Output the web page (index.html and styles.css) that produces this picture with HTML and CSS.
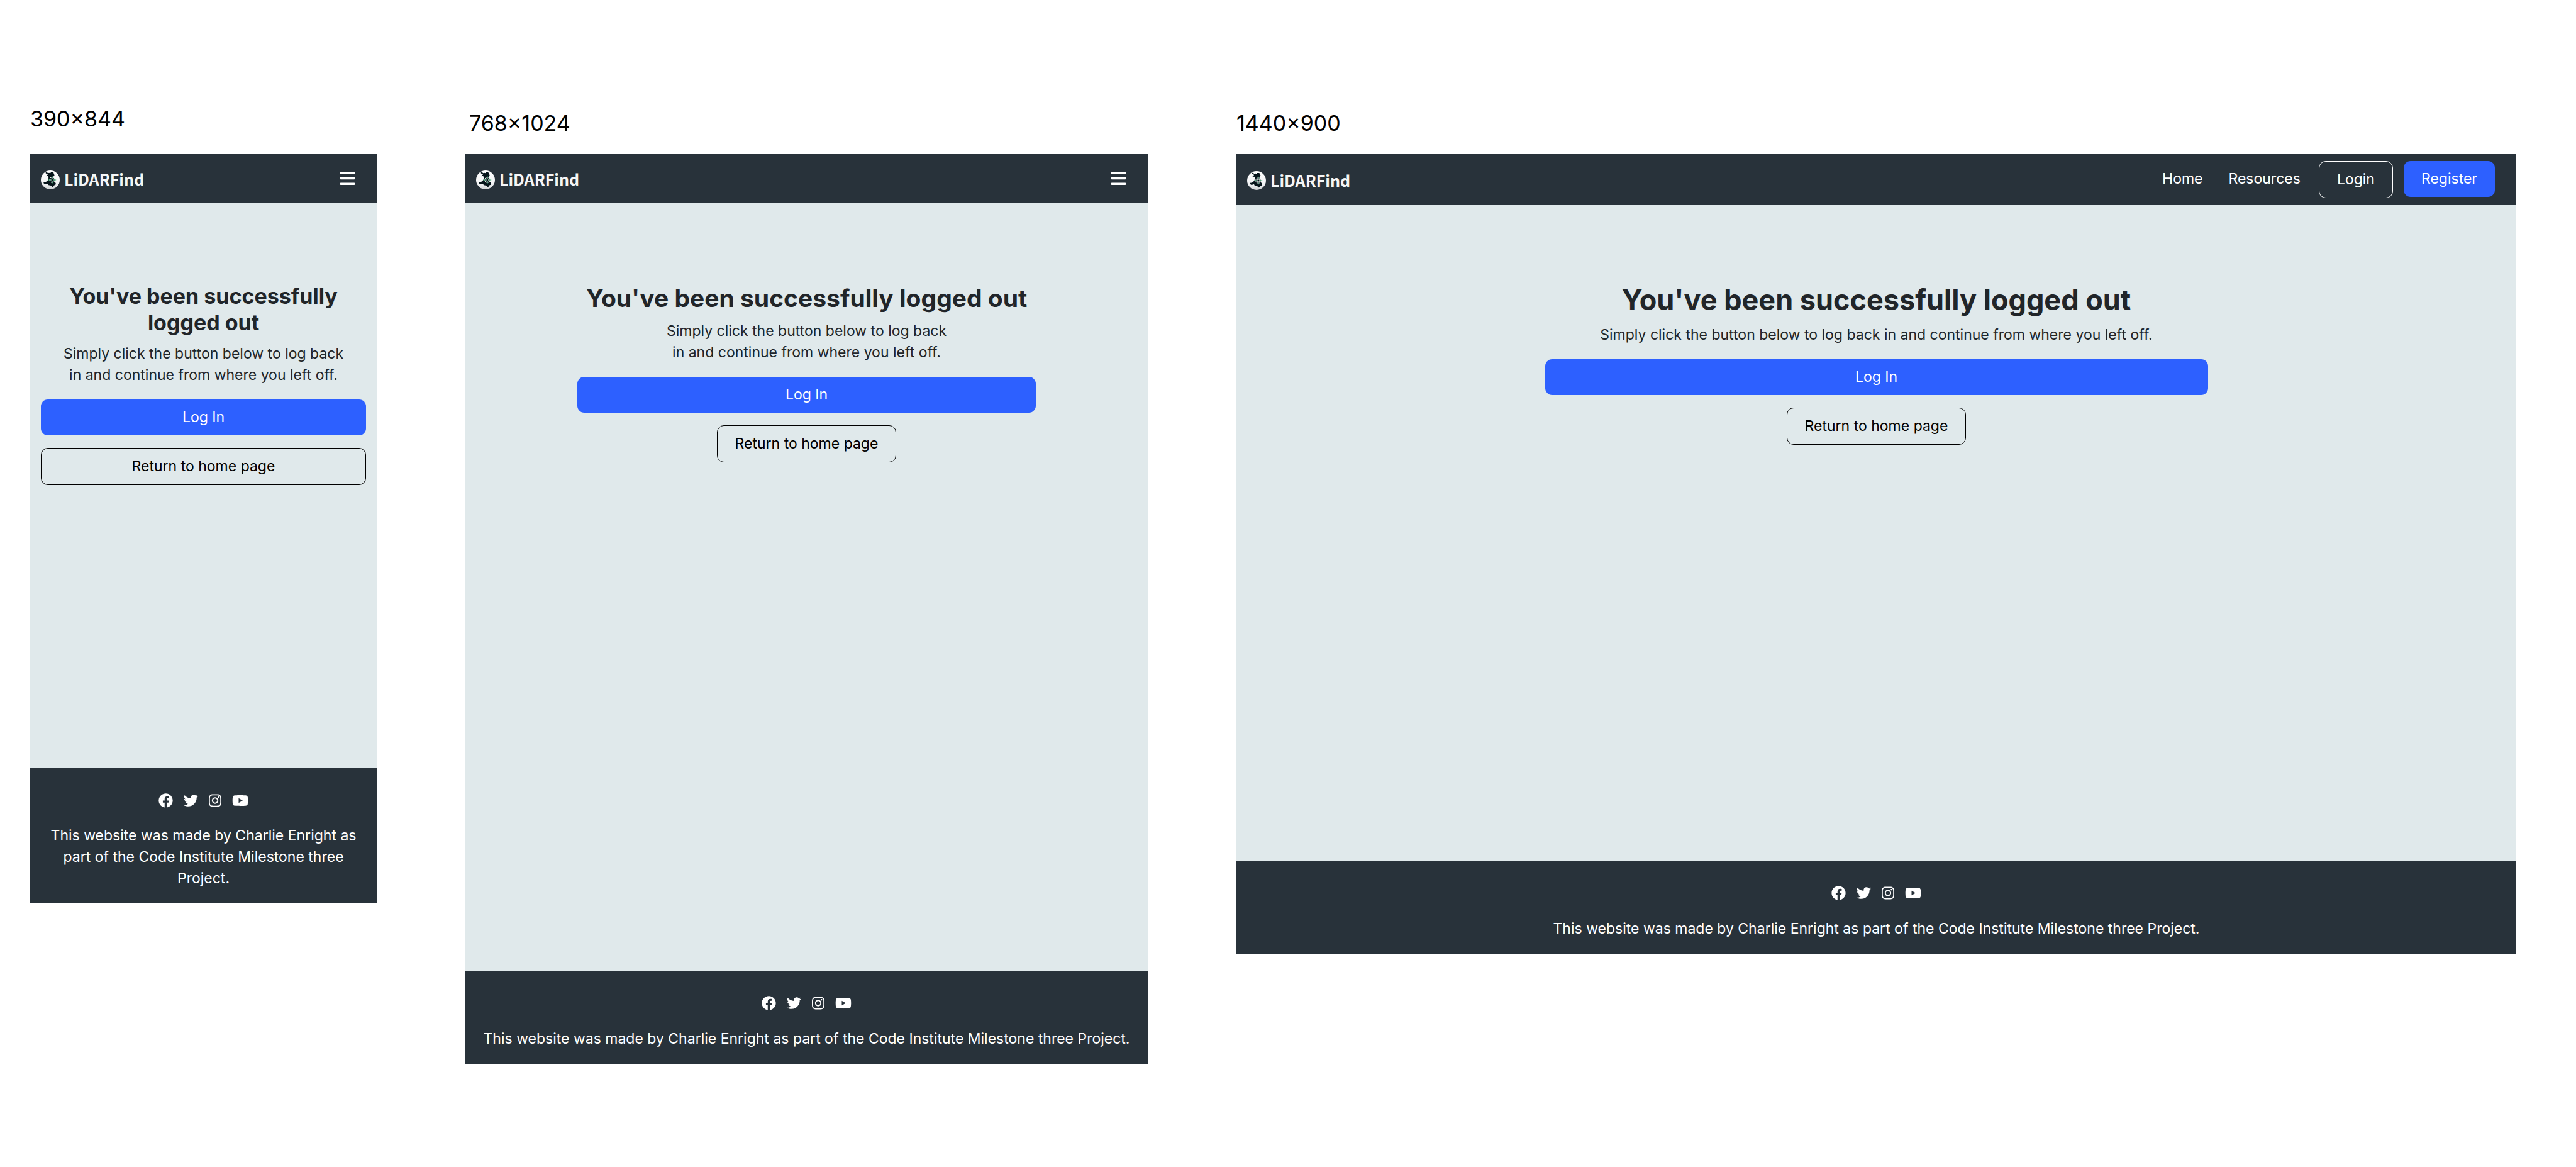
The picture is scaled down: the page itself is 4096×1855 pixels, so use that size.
FILE: index.html
```html
<!DOCTYPE html>
<html lang="en">
<head>
<meta charset="utf-8">
<title>LiDARFind – Logged out</title>
<link rel="stylesheet" href="styles.css">
</head>
<body>
<svg class="sprite" aria-hidden="true">
  <defs>
    <linearGradient id="globe-fill" x1="0" y1="0" x2="0" y2="1">
      <stop offset="0" stop-color="#ffffff"/>
      <stop offset="0.7" stop-color="#f2f3f4"/>
      <stop offset="1" stop-color="#cfd2d4"/>
    </linearGradient>
  </defs>
  <symbol id="logo-mark" viewBox="0 0 124 124">
    <circle cx="62" cy="62" r="62" fill="url(#globe-fill)"/>
    <path fill="#06141a" d="M33 20 L31 14 L37 10 L42 13 L46 18 L54 15 L62 18 L66 12 L78 12 L84 16 L85 24 L90 30 L84 36 L82 44 L88 52 L92 62 L90 72 L98 84 L96 94 L86 98 L82 106 L76 109 L72 102 L62 98 L50 96 L46 88 L38 86 L34 91 L26 90 L18 84 L18 77 L30 76 L40 70 L48 62 L50 52 L50 42 L46 36 L36 38 L37 32 L46 26 L42 22 Z"/>
    <g fill="none" stroke="#f4f6f6" stroke-width="4">
      <circle cx="74" cy="62" r="17"/>
      <circle cx="74" cy="62" r="9"/>
    </g>
    <path fill="none" stroke="#2fae6b" stroke-width="4" d="M74 36V54M74 70V88M48 62H66M82 62H100"/>
  </symbol>
  <symbol id="icon-menu" viewBox="0 0 25 21">
    <path fill="none" stroke="#fff" stroke-width="3.5" stroke-linecap="round" d="M1.8 1.8H23.2M1.8 10.5H23.2M1.8 19.2H23.2"/>
  </symbol>
  <symbol id="icon-facebook" viewBox="0 0 512 512">
    <path fill="#fff" d="M504 256C504 119 393 8 256 8S8 119 8 256c0 123.800 90.700 226.400 209.250 245V327.700h-63V256h63v-54.640c0-62.150 37-96.480 93.670-96.480 27.140 0 55.520 4.840 55.520 4.840v61h-31.280c-30.800 0-40.410 19.120-40.410 38.730V256h68.780l-11 71.690h-57.780V501C413.310 482.380 504 379.780 504 256z"/>
  </symbol>
  <symbol id="icon-twitter" viewBox="0 0 512 512">
    <path fill="#fff" d="M459.370 151.716c.325 4.548.325 9.097.325 13.645 0 138.720-105.583 298.558-298.558 298.558-59.452 0-114.680-17.219-161.137-47.106 8.447.974 16.568 1.299 25.340 1.299 49.055 0 94.213-16.568 130.274-44.832-46.132-.975-84.792-31.188-98.112-72.772 6.498.974 12.995 1.624 19.818 1.624 9.421 0 18.843-1.300 27.614-3.573-48.081-9.747-84.143-51.980-84.143-102.985v-1.299c13.969 7.797 30.214 12.670 47.431 13.319-28.264-18.843-46.781-51.005-46.781-87.391 0-19.492 5.197-37.360 14.294-52.954 51.655 63.675 129.300 105.258 216.365 109.807-1.624-7.797-2.599-15.918-2.599-24.040 0-57.828 46.782-104.934 104.934-104.934 30.213 0 57.502 12.670 76.670 33.137 23.715-4.548 46.456-13.320 66.599-25.340-7.798 24.366-24.366 44.833-46.132 57.827 21.117-2.273 41.584-8.122 60.426-16.243-14.292 20.791-32.161 39.308-52.628 54.253z"/>
  </symbol>
  <symbol id="icon-instagram" viewBox="0 0 448 512">
    <path fill="#fff" d="M224.100 141c-63.600 0-114.900 51.300-114.900 114.900s51.300 114.900 114.900 114.900S339 319.500 339 255.900 287.700 141 224.100 141zm0 189.600c-41.100 0-74.700-33.500-74.700-74.700s33.500-74.700 74.700-74.700 74.700 33.500 74.700 74.700-33.600 74.700-74.700 74.700zm146.400-194.300c0 14.900-12 26.800-26.800 26.800-14.900 0-26.800-12-26.800-26.800s12-26.800 26.800-26.800 26.800 12 26.800 26.800zm76.100 27.200c-1.700-35.900-9.900-67.700-36.200-93.900-26.200-26.200-58-34.400-93.900-36.200-37-2.100-147.900-2.100-184.900 0-35.800 1.700-67.600 9.900-93.900 36.100s-34.400 58-36.200 93.900c-2.100 37-2.100 147.900 0 184.900 1.700 35.900 9.900 67.700 36.200 93.900s58 34.400 93.900 36.200c37 2.100 147.900 2.100 184.900 0 35.900-1.700 67.700-9.900 93.900-36.200 26.200-26.200 34.400-58 36.200-93.900 2.100-37 2.100-147.800 0-184.800zM398.800 388c-7.800 19.600-22.900 34.700-42.600 42.600-29.500 11.700-99.500 9-132.100 9s-102.700 2.600-132.100-9c-19.600-7.800-34.700-22.900-42.600-42.600-11.700-29.500-9-99.500-9-132.100s-2.600-102.700 9-132.100c7.800-19.600 22.900-34.700 42.600-42.600 29.500-11.700 99.500-9 132.100-9s102.700-2.600 132.100 9c19.600 7.800 34.700 22.900 42.600 42.600 11.700 29.500 9 99.500 9 132.100s2.700 102.700-9 132.100z"/>
  </symbol>
  <symbol id="icon-youtube" viewBox="0 0 576 512">
    <path fill="#fff" d="M549.655 124.083c-6.281-23.650-24.787-42.276-48.284-48.597C458.781 64 288 64 288 64S117.220 64 74.629 75.486c-23.497 6.322-42.003 24.947-48.284 48.597-11.412 42.867-11.412 132.305-11.412 132.305s0 89.438 11.412 132.305c6.281 23.650 24.787 41.500 48.284 47.821C117.220 448 288 448 288 448s170.780 0 213.371-11.486c23.497-6.321 42.003-24.171 48.284-47.821 11.412-42.867 11.412-132.305 11.412-132.305s0-89.438-11.412-132.305zm-317.510 213.508V175.185l142.739 81.205-142.739 81.201z"/>
  </symbol>
</svg>

<div class="board">
  <section class="preview preview-mobile">
    <h2 class="preview-label">390×844</h2>
    <div class="screen">
      <header class="navbar">
        <a class="brand" href="#"><svg class="brand-mark" aria-hidden="true"><use href="#logo-mark"/></svg><span class="brand-name">LiDARFind</span></a>
        <button class="menu-toggle" type="button" aria-label="Open menu"><svg class="menu-icon" aria-hidden="true"><use href="#icon-menu"/></svg></button>
      </header>
      <main class="content">
        <h1 class="title">You've been successfully logged out</h1>
        <p class="lead">Simply click the button below to log back in and continue from where you left off.</p>
        <div class="actions">
          <button class="btn btn-primary" type="button">Log In</button>
          <button class="btn btn-outline" type="button">Return to home page</button>
        </div>
      </main>
      <footer class="footer">
        <nav class="social" aria-label="Social media">
          <a class="social-link" href="#" aria-label="Facebook"><svg class="icon" aria-hidden="true"><use href="#icon-facebook"/></svg></a>
          <a class="social-link" href="#" aria-label="Twitter"><svg class="icon" aria-hidden="true"><use href="#icon-twitter"/></svg></a>
          <a class="social-link" href="#" aria-label="Instagram"><svg class="icon icon-narrow" aria-hidden="true"><use href="#icon-instagram"/></svg></a>
          <a class="social-link" href="#" aria-label="YouTube"><svg class="icon icon-wide" aria-hidden="true"><use href="#icon-youtube"/></svg></a>
        </nav>
        <p class="credit">This website was made by Charlie Enright as part of the Code Institute Milestone three Project.</p>
      </footer>
    </div>
  </section>

  <section class="preview preview-tablet">
    <h2 class="preview-label">768×1024</h2>
    <div class="screen">
      <header class="navbar">
        <a class="brand" href="#"><svg class="brand-mark" aria-hidden="true"><use href="#logo-mark"/></svg><span class="brand-name">LiDARFind</span></a>
        <button class="menu-toggle" type="button" aria-label="Open menu"><svg class="menu-icon" aria-hidden="true"><use href="#icon-menu"/></svg></button>
      </header>
      <main class="content">
        <h1 class="title">You've been successfully logged out</h1>
        <p class="lead">Simply click the button below to log back in and continue from where you left off.</p>
        <div class="actions">
          <button class="btn btn-primary" type="button">Log In</button>
          <button class="btn btn-outline" type="button">Return to home page</button>
        </div>
      </main>
      <footer class="footer">
        <nav class="social" aria-label="Social media">
          <a class="social-link" href="#" aria-label="Facebook"><svg class="icon" aria-hidden="true"><use href="#icon-facebook"/></svg></a>
          <a class="social-link" href="#" aria-label="Twitter"><svg class="icon" aria-hidden="true"><use href="#icon-twitter"/></svg></a>
          <a class="social-link" href="#" aria-label="Instagram"><svg class="icon icon-narrow" aria-hidden="true"><use href="#icon-instagram"/></svg></a>
          <a class="social-link" href="#" aria-label="YouTube"><svg class="icon icon-wide" aria-hidden="true"><use href="#icon-youtube"/></svg></a>
        </nav>
        <p class="credit">This website was made by Charlie Enright as part of the Code Institute Milestone three Project.</p>
      </footer>
    </div>
  </section>

  <section class="preview preview-desktop">
    <h2 class="preview-label">1440×900</h2>
    <div class="screen">
      <header class="navbar">
        <a class="brand" href="#"><svg class="brand-mark" aria-hidden="true"><use href="#logo-mark"/></svg><span class="brand-name">LiDARFind</span></a>
        <nav class="nav-links" aria-label="Main">
          <a class="nav-link" href="#">Home</a>
          <a class="nav-link" href="#">Resources</a>
          <button class="btn btn-outline btn-light" type="button">Login</button>
          <button class="btn btn-primary" type="button">Register</button>
        </nav>
      </header>
      <main class="content">
        <h1 class="title">You've been successfully logged out</h1>
        <p class="lead">Simply click the button below to log back in and continue from where you left off.</p>
        <div class="actions">
          <button class="btn btn-primary" type="button">Log In</button>
          <button class="btn btn-outline" type="button">Return to home page</button>
        </div>
      </main>
      <footer class="footer">
        <nav class="social" aria-label="Social media">
          <a class="social-link" href="#" aria-label="Facebook"><svg class="icon" aria-hidden="true"><use href="#icon-facebook"/></svg></a>
          <a class="social-link" href="#" aria-label="Twitter"><svg class="icon" aria-hidden="true"><use href="#icon-twitter"/></svg></a>
          <a class="social-link" href="#" aria-label="Instagram"><svg class="icon icon-narrow" aria-hidden="true"><use href="#icon-instagram"/></svg></a>
          <a class="social-link" href="#" aria-label="YouTube"><svg class="icon icon-wide" aria-hidden="true"><use href="#icon-youtube"/></svg></a>
        </nav>
        <p class="credit">This website was made by Charlie Enright as part of the Code Institute Milestone three Project.</p>
      </footer>
    </div>
  </section>
</div>
</body>
</html>
```
FILE: styles.css
```css
*,
*::before,
*::after {
  box-sizing: border-box;
}

body {
  margin: 0;
  background: #fff;
  color: #212529;
  font-family: Inter, "Liberation Sans", sans-serif;
  font-size: 23px;
  line-height: 34px;
}

h1,
h2,
p {
  margin: 0;
}

a {
  color: inherit;
  text-decoration: none;
}

button {
  font: inherit;
  cursor: pointer;
}

svg {
  display: block;
}

/* Keeps the gradient available to the symbols, so it is not display: none */
.sprite {
  position: absolute;
  width: 0;
  height: 0;
}

/* Board with the three previews */
.board {
  display: grid;
  grid-template-columns: 551fr 1085fr 2035fr;
  align-items: start;
  gap: 141px;
  padding: 168px 95px 80px 48px;
}

.preview-label {
  padding-top: 7px;
  margin-bottom: 27px;
  color: #000;
  font-size: 34px;
  font-weight: 400;
  line-height: 42px;
}

.preview-mobile .preview-label {
  padding-top: 0;
  margin-bottom: 34px;
}

.preview-tablet .preview-label {
  padding-left: 6px;
}

.screen {
  display: flex;
  flex-direction: column;
  background: #e0e9eb;
}

.preview-mobile .screen {
  aspect-ratio: 390 / 844;
}

.preview-tablet .screen {
  aspect-ratio: 768 / 1024;
}

.preview-desktop .screen {
  aspect-ratio: 1440 / 900;
}

/* Navigation bar */
.navbar {
  display: flex;
  align-items: center;
  justify-content: space-between;
  min-height: 79px;
  padding: 0 34px 0 17px;
  background: #28323a;
  color: #fff;
}

.brand {
  display: flex;
  align-items: center;
  gap: 7px;
  padding-top: 4px;
  color: #f5f6f7;
  font-family: "Noto Sans CJK JP", "Noto Sans", sans-serif;
  font-size: 25px;
  font-weight: 700;
  line-height: 30px;
}

.brand-mark {
  width: 30px;
  height: 30px;
}

.brand-name {
  padding-bottom: 3px;
}

.menu-toggle {
  padding: 0;
  border: 0;
  background: none;
}

.menu-icon {
  width: 25px;
  height: 21px;
}

.nav-links {
  display: flex;
  align-items: flex-start;
  gap: 17px;
  padding: 12px 0 11px;
}

.nav-link {
  padding: 11px 12px;
}

/* Buttons */
.btn {
  padding: 11px 28px 12px;
  border: 0;
  border-radius: 11px;
  text-align: center;
}

.btn-primary {
  background: #2d60ff;
  color: #fff;
}

.btn-outline {
  border: 1px solid #000;
  background: none;
  color: #000;
}

.btn-light {
  border-color: #fff;
  color: #fff;
}

/* Message */
.content {
  flex: 1;
  padding: 127px 17px 40px;
  text-align: center;
}

.preview-desktop .content {
  padding-top: 124px;
}

.title {
  margin-bottom: 11px;
  font-size: 34px;
  font-weight: 700;
  line-height: 42px;
}

.preview-tablet .title {
  font-size: 39px;
  line-height: 48px;
}

.preview-desktop .title {
  font-size: 45px;
  line-height: 54px;
}

.lead {
  max-width: 460px;
  margin: 0 auto 22px;
}

.preview-desktop .lead {
  max-width: none;
}

.actions {
  display: flex;
  flex-direction: column;
  gap: 20px;
}

.preview-tablet .actions,
.preview-desktop .actions {
  align-items: center;
}

.preview-tablet .actions .btn-primary {
  width: 100%;
  max-width: 729px;
}

.preview-desktop .actions .btn-primary {
  width: 100%;
  max-width: 1054px;
}

/* Footer */
.footer {
  padding: 34px 17px 23px;
  background: #28323a;
  color: #fff;
  text-align: center;
}

.social {
  display: flex;
  align-items: center;
  justify-content: center;
  gap: 17px;
  height: 34px;
  margin-bottom: 22px;
}

.icon {
  width: 23px;
  height: 23px;
}

.icon-narrow {
  width: 20px;
}

.icon-wide {
  width: 26px;
}
```
